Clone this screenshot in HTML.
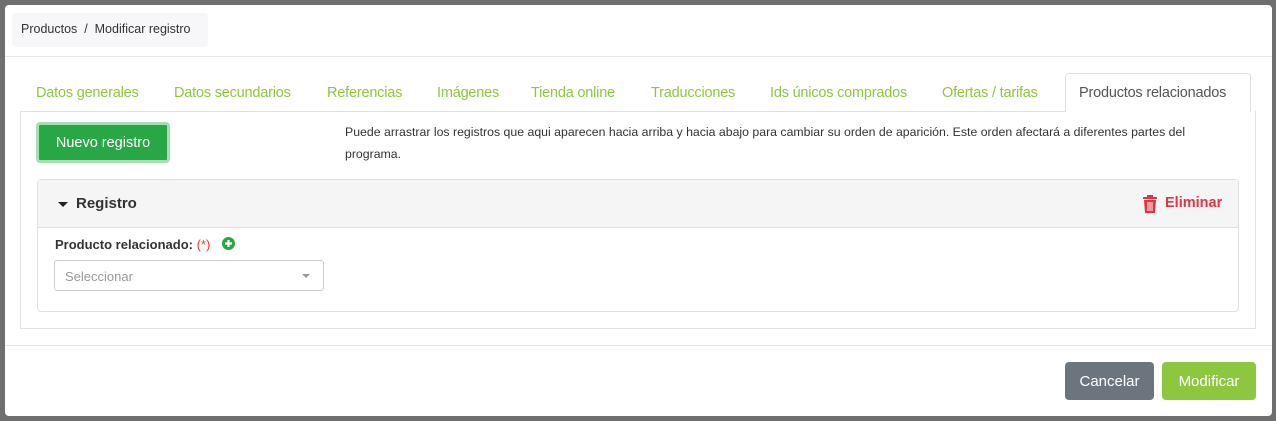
<!DOCTYPE html>
<html><head><meta charset="utf-8"><style>
*{box-sizing:border-box;margin:0;padding:0}
body{width:1276px;height:421px;background:#6f6f6f;font-family:"Liberation Sans",sans-serif;position:relative;overflow:hidden}
.a{position:absolute;white-space:nowrap}
.modal{left:5px;top:5px;width:1267px;height:411px;background:#fff;border-radius:4px}
.tab{top:85px;font-size:14.5px;color:#8dc63f;letter-spacing:-0.2px}
</style></head><body>
<div class="a modal"></div>
<div class="a" style="left:12px;top:13px;width:196px;height:34px;background:#f7f7f9;border-radius:4px"></div>
<div class="a" style="left:21px;top:22px;font-size:12.5px;color:#333">Productos &nbsp;/&nbsp; Modificar registro</div>
<div class="a" style="left:5px;top:56px;width:1267px;height:1px;background:#e5e5e5"></div>
<div class="a tab" style="left:36px">Datos generales</div>
<div class="a tab" style="left:174px">Datos secundarios</div>
<div class="a tab" style="left:327px">Referencias</div>
<div class="a tab" style="left:437px">Imágenes</div>
<div class="a tab" style="left:531px">Tienda online</div>
<div class="a tab" style="left:651px">Traducciones</div>
<div class="a tab" style="left:770px">Ids únicos comprados</div>
<div class="a tab" style="left:942px">Ofertas / tarifas</div>
<div class="a" style="left:20px;top:111px;width:1236px;height:218px;border:1px solid #dee2e6;border-top:none"></div>
<div class="a" style="left:20px;top:111px;width:1045px;height:1px;background:#dee2e6"></div>
<div class="a" style="left:1065px;top:73px;width:186px;height:39px;border:1px solid #dee2e6;border-bottom:none;border-radius:4px 4px 0 0;background:#fff"></div>
<div class="a tab" style="left:1079px;color:#555">Productos relacionados</div>
<div class="a" style="left:36px;top:122px;width:134px;height:41px;background:#28a745;border:3px solid #a8dcb5;border-radius:4px;color:#fff;font-size:14.5px;text-align:center;line-height:37px">Nuevo registro</div>
<div class="a" style="left:345px;top:121px;font-size:12.3px;color:#333;line-height:22px;white-space:normal;width:850px">Puede arrastrar los registros que aqui aparecen hacia arriba y hacia abajo para cambiar su orden de aparición. Este orden afectará a diferentes partes del programa.</div>
<div class="a" style="left:37px;top:179px;width:1202px;height:133px;border:1px solid #dfdfdf;border-radius:4px"></div>
<div class="a" style="left:38px;top:180px;width:1200px;height:48px;background:#f5f5f5;border-bottom:1px solid #dfdfdf"></div>
<div class="a" style="left:58px;top:202px;width:0;height:0;border-left:5px solid transparent;border-right:5px solid transparent;border-top:5px solid #222"></div>
<div class="a" style="left:76px;top:195px;font-size:15px;font-weight:bold;color:#333">Registro</div>
<svg class="a" style="left:1142px;top:195px" width="16" height="18" viewBox="0 0 16 18"><rect x="1" y="2" width="14" height="2" fill="#dc3545"/><rect x="5" y="0" width="6" height="3" fill="#dc3545"/><path d="M2 5h12l-1 13H3z" fill="#dc3545"/><path d="M6 7v9M8 7v9M10 7v9" stroke="#fff" stroke-width="1"/></svg>
<div class="a" style="left:1165px;top:195px;font-size:14.5px;font-weight:bold;color:#dc3545">Eliminar</div>
<div class="a" style="left:55px;top:237px;font-size:13px;font-weight:bold;color:#333">Producto relacionado: <span style="color:#ff3333;font-weight:normal">(*)</span></div>
<svg class="a" style="left:222px;top:237px" width="13" height="13" viewBox="0 0 13 13"><circle cx="6.5" cy="6.5" r="6.5" fill="#28a745"/><path d="M6.5 3v7M3 6.5h7" stroke="#fff" stroke-width="2.2"/></svg>
<div class="a" style="left:54px;top:260px;width:270px;height:31px;border:1px solid #ccc;border-radius:3px"></div>
<div class="a" style="left:65px;top:269px;font-size:13px;color:#999">Seleccionar</div>
<div class="a" style="left:302px;top:274px;width:0;height:0;border-left:4px solid transparent;border-right:4px solid transparent;border-top:4px solid #999"></div>
<div class="a" style="left:5px;top:345px;width:1267px;height:1px;background:#e5e5e5"></div>
<div class="a" style="left:1065px;top:362px;width:89px;height:38px;background:#6c757d;border-radius:4px;color:#fff;font-size:15px;text-align:center;line-height:40px">Cancelar</div>
<div class="a" style="left:1162px;top:362px;width:94px;height:38px;background:#8dc63f;border-radius:4px;color:#fff;font-size:15px;text-align:center;line-height:40px">Modificar</div>
</body></html>
